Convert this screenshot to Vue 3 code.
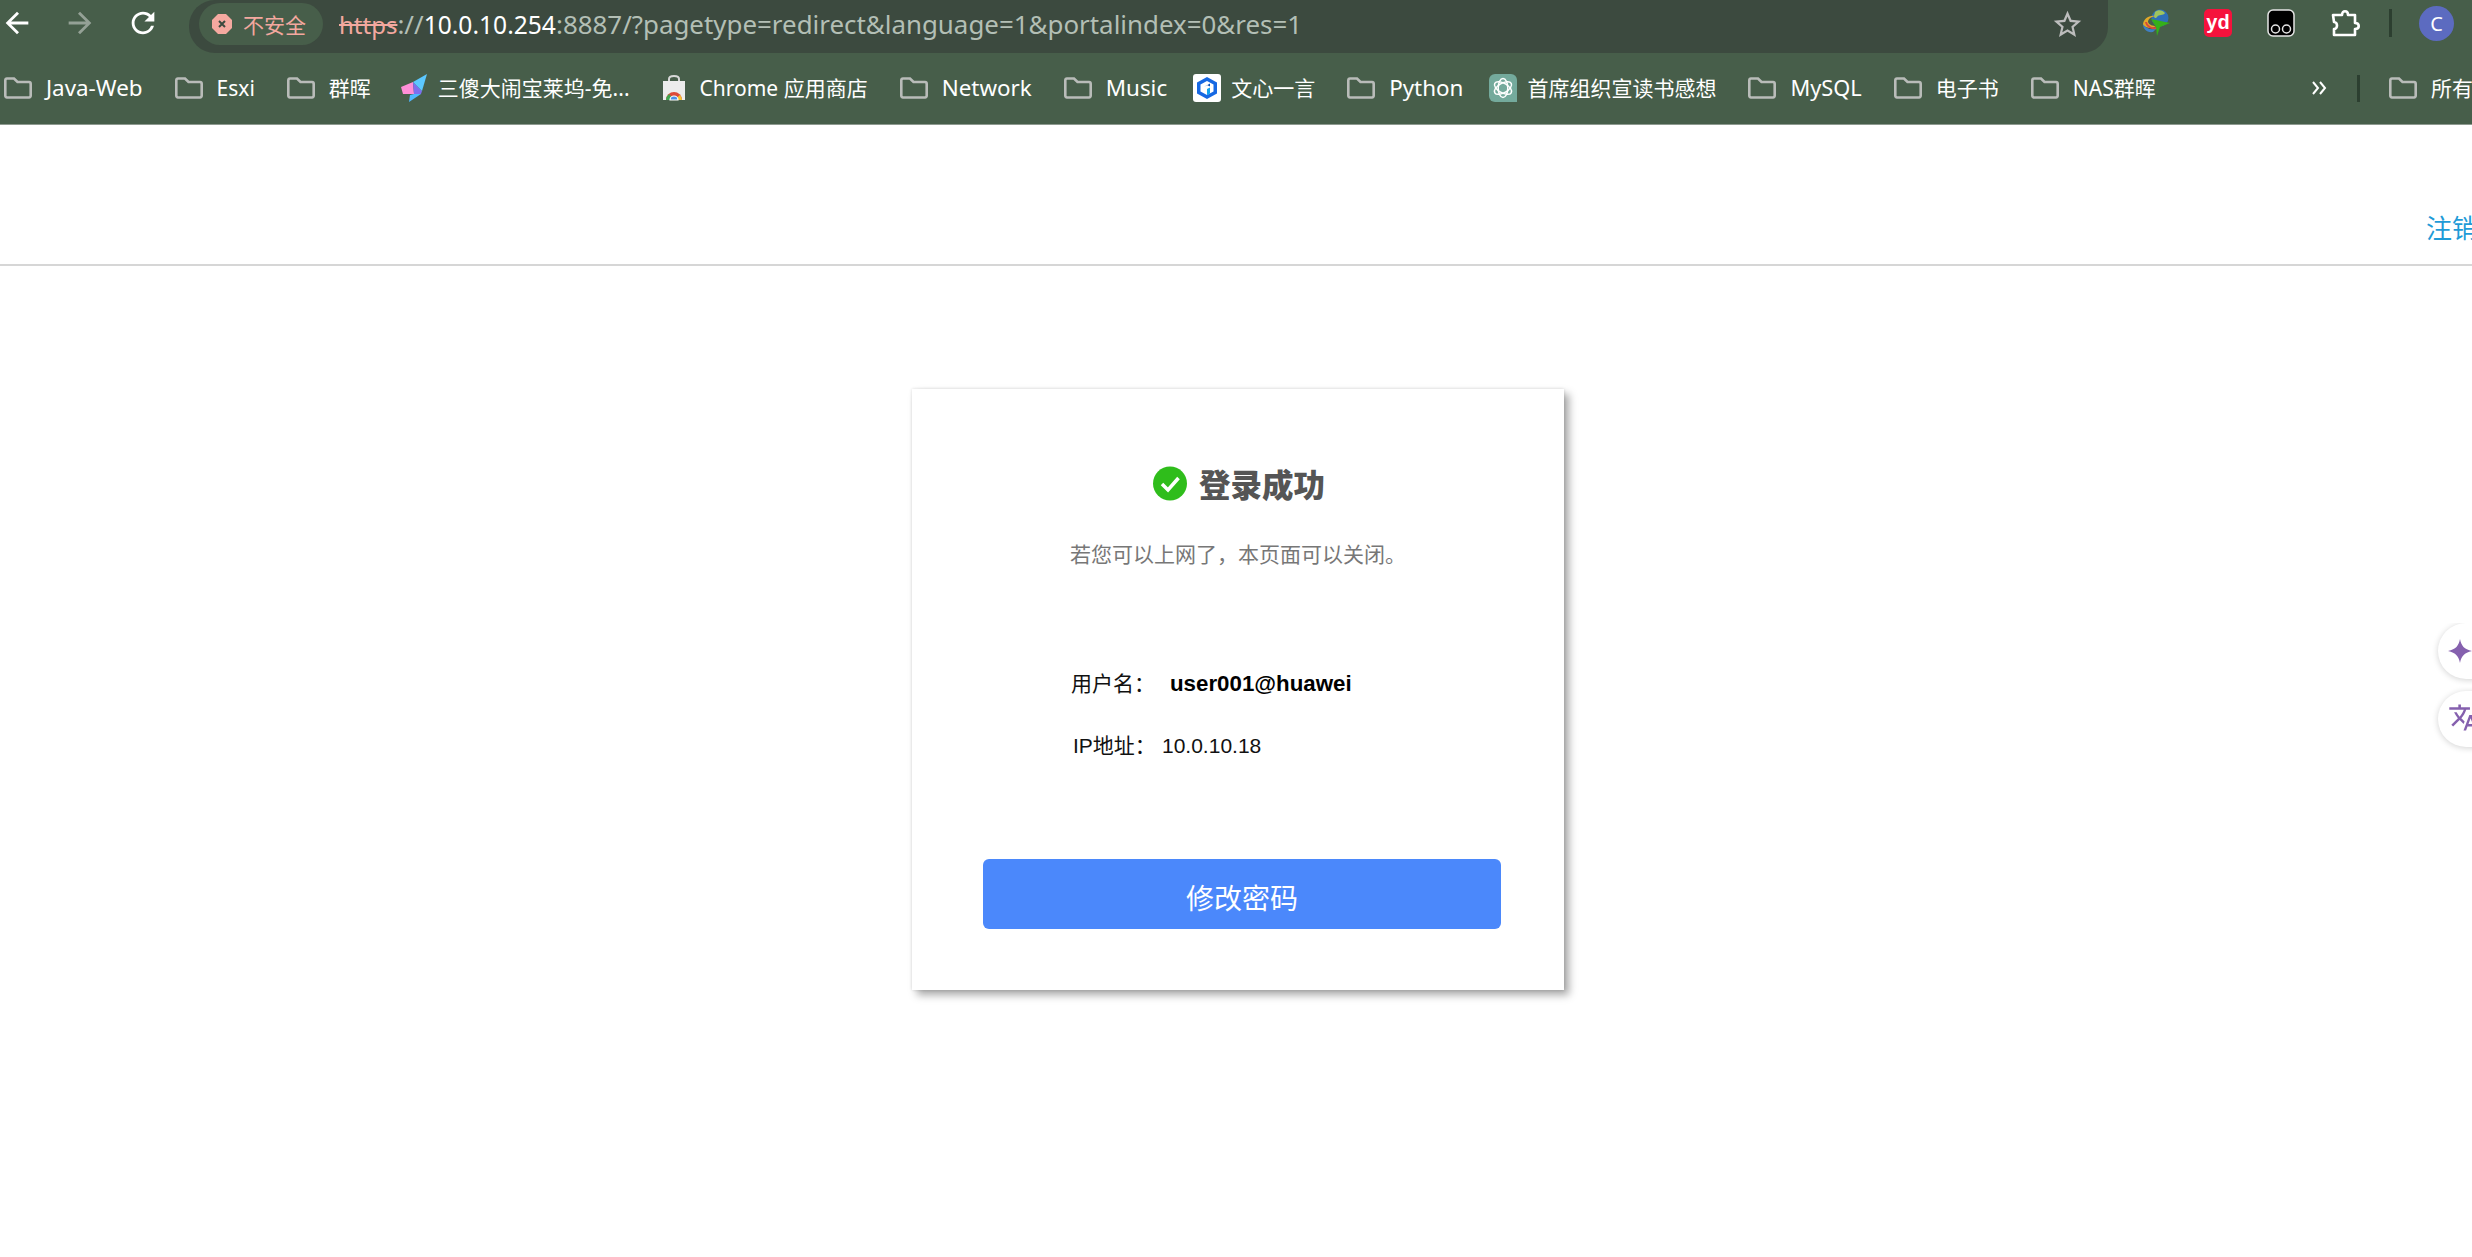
<script setup>
const marks = [
  { icon: 'folder', text: 'Java-Web', wide: true },
  { icon: 'folder', text: 'Esxi' },
  { icon: 'folder', text: '群晖' },
  { icon: 'kite', text: '三傻大闹宝莱坞-免...', pull: 'pull-a' },
  { icon: 'store', text: 'Chrome 应用商店' },
  { icon: 'folder', text: 'Network', wide: true },
  { icon: 'folder', text: 'Music', wide: true },
  { icon: 'wenxin', text: '文心一言', pull: 'pull-b' },
  { icon: 'folder', text: 'Python', wide: true },
  { icon: 'gpt', text: '首席组织宣读书感想', pull: 'pull-b' },
  { icon: 'folder', text: 'MySQL', wide: true, narrow: true },
  { icon: 'folder', text: '电子书' },
  { icon: 'folder', text: 'NAS群晖' }
]
</script>

<template>
  <div class="app">
    <div class="chrome">
      <div class="toolbar">
        <div class="nav">
          <svg class="nav-icon" viewBox="0 0 24 24"><path d="M20 11H7.83l5.59-5.59L12 4l-8 8 8 8 1.41-1.41L7.83 13H20v-2z" /></svg>
          <svg class="nav-icon dim" viewBox="0 0 24 24"><path d="M4 11h12.17l-5.59-5.59L12 4l8 8-8 8-1.41-1.41L16.17 13H4v-2z" /></svg>
          <svg class="nav-icon" viewBox="0 0 24 24"><path d="M17.65 6.35A7.958 7.958 0 0 0 12 4c-4.42 0-7.99 3.58-7.99 8s3.57 8 7.99 8c3.73 0 6.84-2.55 7.73-6h-2.08A5.99 5.99 0 0 1 12 18c-3.31 0-6-2.69-6-6s2.69-6 6-6c1.66 0 3.14.69 4.22 1.78L13 11h7V4l-2.35 2.35z" /></svg>
        </div>
        <div class="omnibox">
          <div class="chip">
            <svg class="warn" viewBox="0 0 20 20">
              <path d="M6 0h8l6 6v8l-6 6H6l-6-6V6z" fill="#f5a9a0" />
              <path d="M7 7l6 6M13 7l-6 6" stroke="#3c4a3f" stroke-width="2" />
            </svg>
            <span>不安全</span>
          </div>
          <div class="url"><span class="https">https</span><span class="rest">://</span><span class="host">10.0.10.254</span><span class="rest">:8887/?pagetype=redirect&amp;language=1&amp;portalindex=0&amp;res=1</span></div>
          <svg class="star" viewBox="0 0 24 24"><path d="M22 9.24l-7.19-.62L12 2 9.19 8.63 2 9.24l5.46 4.73L5.82 21 12 17.27 18.18 21l-1.63-7.03L22 9.24zM12 15.4l-3.76 2.27 1-4.28-3.32-2.88 4.38-.38L12 6.1l1.71 4.04 4.38.38-3.32 2.88 1 4.28L12 15.4z" /></svg>
        </div>
        <div class="exts">
          <svg class="ext" viewBox="0 0 28 28">
            <circle cx="18" cy="9" r="8.5" fill="#2f6fb8" />
            <path d="M13 3c3-3 8-2 10 1-2 3-6 1-8 4-1 2-3 1-3-1z" fill="#9fc45e" />
            <path d="M14 17A10 10 0 0 1 1 16c0-6 6-10 12-9-4 1-7 3-7 6 1 3 5 4 8 4z" fill="#e0a92a" />
            <path d="M5 13c1 4 5 6 10 5v2c-6 1-11-2-12-7z" fill="#d84a3a" />
            <path d="M1 15c0 5 4 9 10 8l3-3c-6 1-11-1-13-5z" fill="#3f7fc4" />
            <path d="M9 10l19 4-10 4-3 9-1-9z" fill="#35b019" />
          </svg>
          <div class="yd">yd</div>
          <svg class="ext" viewBox="0 0 28 28">
            <rect x="1" y="1" width="26" height="26" rx="5" fill="#000" stroke="#e5e5e5" stroke-width="1.5" />
            <circle cx="8.5" cy="20" r="4" fill="none" stroke="#e5e5e5" stroke-width="1.5" />
            <circle cx="19.5" cy="20" r="4" fill="none" stroke="#e5e5e5" stroke-width="1.5" />
          </svg>
          <svg class="ext puzzle" viewBox="0 0 30 28">
            <path d="M2 6h9c0-5 6-5 6 0h7v8c5 0 5 6 0 6v6H3v-6c4 0 4-7 0-7z" fill="none" stroke="#fff" stroke-width="2.6" stroke-linejoin="round" />
          </svg>
          <div class="sep"></div>
          <div class="avatar">C</div>
        </div>
      </div>
      <div class="bookmarks">
        <div class="marks">
          <div v-for="m in marks" :key="m.text" class="mark" :class="[m.pull, { wide: m.wide, narrow: m.narrow, favmark: m.icon !== 'folder' }]">
            <svg v-if="m.icon === 'folder'" class="folder" viewBox="0 0 28 22">
              <path d="M3 1.5h7l3.5 3.5H25a1.8 1.8 0 0 1 1.7 1.8v12a1.8 1.8 0 0 1-1.7 1.7H3a1.8 1.8 0 0 1-1.7-1.7V3.200A1.8 1.8 0 0 1 3 1.5z" fill="none" stroke="#b9bcb9" stroke-width="2.6" />
            </svg>
            <svg v-else-if="m.icon === 'kite'" class="fav" viewBox="0 0 28 28">
              <path d="M1 13l12-5 1 12H3z" fill="#ff8fd8" />
              <path d="M13 8l9 9-1 3h-7z" fill="#7d6ff0" />
              <path d="M13 8L27 0l-5 17z" fill="#5cc8ff" />
              <path d="M14 20h7l-12 8 1-7z" fill="#4fb8ff" />
            </svg>
            <svg v-else-if="m.icon === 'store'" class="fav store" viewBox="0 0 24 28">
              <path d="M7 7V5c0-4 10-4 10 0v2" fill="none" stroke="#d8d8d8" stroke-width="2" />
              <path d="M1 7h22v19H1z" fill="#ececec" />
              <path d="M4 26a8 8 0 0 1 16 0z" fill="#dd4a38" />
              <path d="M4 26a8 8 0 0 1 3-6l5 6z" fill="#3ea64f" />
              <path d="M20 26a8 8 0 0 0-2-5l-6 5z" fill="#f6c333" />
              <path d="M8 26a4 4 0 0 1 8 0z" fill="#4a90e8" stroke="#fff" stroke-width="1.2" />
            </svg>
            <svg v-else-if="m.icon === 'wenxin'" class="fav" viewBox="0 0 28 28">
              <rect width="28" height="28" rx="3" fill="#fff" />
              <path d="M14 3l10 5.5v11L14 25 4 19.5v-11z" fill="#1668e3" />
              <path d="M14 7l6.5 3.5v7L14 21l-6.500-3.500v-7z" fill="#fff" />
              <path d="M11 20v-7l3-2 3 1.500v-3l-6 3.500V20z" fill="#0c4fb8" />
              <path d="M14 15l3-1.500v6l-3 1.700z" fill="#12a2ee" />
            </svg>
            <svg v-else class="fav" viewBox="0 0 28 28">
              <path d="M6 0h16a6 6 0 0 1 6 6v22H6a6 6 0 0 1-6-6V6a6 6 0 0 1 6-6z" fill="#74aa9c" />
              <g fill="none" stroke="#fff" stroke-width="1.500">
                <ellipse cx="14" cy="14" rx="4.800" ry="9.500" />
                <ellipse cx="14" cy="14" rx="4.800" ry="9.500" transform="rotate(60 14 14)" />
                <ellipse cx="14" cy="14" rx="4.800" ry="9.500" transform="rotate(120 14 14)" />
              </g>
            </svg>
            <span>{{ m.text }}</span>
          </div>
        </div>
        <div class="mark-end">
          <svg class="more" viewBox="0 0 16 14"><path d="M2 1l5 6-5 6M9 1l5 6-5 6" fill="none" stroke="#fff" stroke-width="2" /></svg>
          <div class="mark-sep"></div>
          <div class="mark">
            <svg class="folder" viewBox="0 0 28 22">
              <path d="M3 1.500h7l3.500 3.500H25a1.800 1.800 0 0 1 1.700 1.800v12a1.800 1.800 0 0 1-1.700 1.700H3a1.800 1.800 0 0 1-1.700-1.700V3.200A1.800 1.800 0 0 1 3 1.500z" fill="none" stroke="#b9bcb9" stroke-width="2.600" />
            </svg>
            <span>所有书签</span>
          </div>
        </div>
      </div>
    </div>

    <div class="page">
      <header class="head"><a class="logout">注销</a></header>
      <main class="main">
        <section class="card">
          <div class="title">
            <svg class="ok" viewBox="0 0 34 34">
              <circle cx="17" cy="17" r="17" fill="#2fbd1b" />
              <path d="M9 17.500l6 6 10.500-12" fill="none" stroke="#fff" stroke-width="3.500" />
            </svg>
            <h1>登录成功</h1>
          </div>
          <p class="sub">若您可以上网了，本页面可以关闭。</p>
          <div class="row first"><span class="label">用户名：</span><b class="user">user001@huawei</b></div>
          <div class="row second"><span class="label">IP地址：</span><span>10.0.10.18</span></div>
          <button class="btn">修改密码</button>
        </section>
      </main>
      <div class="side">
        <div class="pill">
          <svg class="spark" viewBox="0 0 24 24"><path d="M12 0c1.400 7 4 10 12 12-8 2-10.600 5-12 12-1.400-7-4-10-12-12 8-2 10.600-5 12-12z" /></svg>
        </div>
        <div class="pill">
          <svg class="trans" viewBox="0 0 24 24"><path d="M12.870 15.070l-2.540-2.510.03-.03c1.740-1.940 2.980-4.170 3.710-6.530H17V4h-7V2H8v2H1v1.990h11.170C11.500 7.920 10.440 9.750 9 11.350 8.070 10.320 7.300 9.190 6.690 8h-2c.73 1.630 1.730 3.170 2.980 4.560l-5.090 5.020L4 19l5-5 3.110 3.110.76-2.040zM18.500 10h-2L12 22h2l1.120-3h4.750L21 22h2l-4.500-12zm-2.620 7l1.620-4.330L19.120 17h-3.240z" /></svg>
        </div>
      </div>
    </div>
  </div>
</template>

<style>
html, body { margin: 0; background: #fff; overflow: hidden; }
</style>

<style scoped>
.app {
  width: 2472px;
  height: 1257px;
  overflow: hidden;
  background: #fff;
  font-family: "Noto Sans", "Noto Sans CJK SC", sans-serif;
}
.chrome {
  height: 125px;
  background: #475e4a;
  box-sizing: border-box;
  border-bottom: 1px solid #8e9a90;
  display: flex;
  flex-direction: column;
}
.toolbar {
  height: 53px;
  display: flex;
  align-items: flex-start;
}
.nav {
  display: flex;
  gap: 29px;
  width: 160px;
  margin-right: 29px;
  flex: none;
  height: 46px;
  align-items: center;
  box-sizing: border-box;
}
.nav-icon {
  width: 34px;
  height: 34px;
  fill: #fff;
  flex: none;
}
.dim { opacity: 0.42; }
.omnibox {
  width: 1919px;
  height: 53px;
  flex: none;
  background: #3c4a3f;
  border-radius: 26px 0 26px 26px;
  border-top-right-radius: 0;
  display: flex;
  align-items: flex-start;
  box-sizing: border-box;
  padding: 3px 24px 0 10px;
}
.chip {
  width: 124px;
  height: 42px;
  flex: none;
  box-sizing: border-box;
  border-radius: 21px;
  background: #475e4a;
  color: #f3a89f;
  font-size: 21px;
  display: flex;
  align-items: center;
  padding-left: 13px;
  gap: 11px;
}
.warn { width: 20px; height: 20px; flex: none; }
.url {
  margin-left: 16px;
  height: 42px;
  line-height: 42px;
  font-size: 24px;
  white-space: nowrap;
  flex: 1;
}
.https { color: #f3a89f; text-decoration: line-through; }
.rest { color: #b3bfb5; font-size: 25.9px; }
.host { color: #fff; font-size: 24.6px; }
.star {
  width: 33px;
  height: 33px;
  fill: #bdbdbd;
  flex: none;
  margin-top: 5px;
}
.exts {
  flex: none;
  display: flex;
  align-items: center;
  height: 46px;
  margin-left: 34px;
}
.ext { width: 28px; height: 28px; flex: none; }
.yd {
  width: 28px;
  height: 28px;
  flex: none;
  margin-left: 34px;
  margin-right: 35px;
  border-radius: 5px;
  background: #f5123c;
  color: #fff;
  font: bold 20px/26px "Liberation Sans", sans-serif;
  text-align: center;
}
.puzzle { width: 30px; margin-left: 36px; }
.sep {
  width: 3px;
  height: 28px;
  background: #2c3f30;
  margin-left: 28px;
  flex: none;
}
.avatar {
  width: 35px;
  height: 35px;
  border-radius: 50%;
  background: #5c6bc0;
  color: #fff;
  font-size: 20px;
  line-height: 35px;
  text-align: center;
  margin-left: 27px;
  flex: none;
}
.bookmarks {
  height: 71px;
  display: flex;
  align-items: center;
  justify-content: space-between;
  padding-bottom: 1px;
  box-sizing: border-box;
}
.marks {
  display: flex;
  align-items: center;
  gap: 32px;
  padding-left: 4px;
  flex: none;
}
.mark {
  display: flex;
  align-items: center;
  gap: 14px;
  color: #fff;
  font-size: 21px;
  white-space: nowrap;
  flex: none;
}
.mark > span { line-height: 28px; }
.wide { font-size: 22.4px; }
.narrow { font-size: 21.8px; }
.favmark { gap: 10px; }
.pull-a { margin-left: -3px; }
.pull-b { margin-left: -6px; }
.folder { width: 28px; height: 22px; flex: none; }
.fav { width: 28px; height: 28px; flex: none; }
.store { width: 24px; margin-right: 4px; }
.mark-end {
  width: 161px;
  flex: none;
  display: flex;
  align-items: center;
  overflow: hidden;
}
.more { width: 16px; height: 14px; flex: none; }
.mark-sep {
  width: 3px;
  height: 27px;
  background: #2c3f30;
  margin: 0 29px 0 30px;
  flex: none;
}
.page { position: relative; }
.head {
  height: 141px;
  box-sizing: border-box;
  border-bottom: 2px solid #d6d6d6;
  display: flex;
  justify-content: flex-end;
  align-items: flex-end;
  padding-bottom: 16px;
  margin-right: -6px;
}
.logout {
  color: #1f9bd7;
  font-size: 26px;
  line-height: 40px;
}
.main {
  display: flex;
  justify-content: center;
  padding: 123px 0 0 4px;
}
.card {
  width: 652px;
  box-sizing: border-box;
  padding: 77px 63px 61px 71px;
  background: #fff;
  box-shadow: 5px 5px 8px rgba(0, 0, 0, 0.34), 0 0 3px rgba(0, 0, 0, 0.14);
  display: flex;
  flex-direction: column;
  font-family: "Liberation Sans", "Noto Sans CJK SC", sans-serif;
}
.title {
  height: 35px;
  display: flex;
  align-items: center;
  justify-content: center;
  gap: 12px;
  margin-left: -6px;
}
.ok { width: 34px; height: 35px; flex: none; }
h1 {
  margin: 0;
  font-size: 31.5px;
  line-height: 35px;
  font-weight: 900;
  color: #555;
  font-family: "Noto Sans CJK SC", sans-serif;
}
.sub {
  margin: 39px 0 0 87px;
  font-size: 21px;
  line-height: 30px;
  color: #777;
  white-space: nowrap;
}
.row {
  display: flex;
  font-size: 21px;
  line-height: 30px;
  color: #111;
  margin-left: 88px;
}
.row.first { margin-top: 99px; }
.row.second { margin-top: 32px; margin-left: 90px; }
.first .label { width: 99px; flex: none; }
.second .label { width: 89px; flex: none; }
.user { font-size: 22.3px; color: #000; }
.btn {
  margin-top: 98px;
  height: 70px;
  width: 518px;
  border: 0;
  border-radius: 6px;
  background: #4b88fb;
  color: #fff;
  font-family: "Noto Sans CJK SC", sans-serif;
  font-size: 28px;
  padding: 6px 0 0;
}
.side {
  position: absolute;
  right: 0;
  top: 498px;
  width: 34px;
  overflow: hidden;
  padding: 0 0 10px 8px;
  box-sizing: content-box;
  display: flex;
  flex-direction: column;
  gap: 12px;
}
.pill {
  width: 70px;
  height: 56px;
  border-radius: 28px;
  background: #fff;
  box-shadow: 0 1px 6px rgba(0, 0, 0, 0.18);
  position: relative;
}
.spark {
  position: absolute;
  left: 10px;
  top: 16px;
  width: 24px;
  height: 24px;
  fill: #8560ae;
}
.trans {
  position: absolute;
  left: 10px;
  top: 11px;
  width: 31px;
  height: 31px;
  fill: #8560ae;
}
</style>
